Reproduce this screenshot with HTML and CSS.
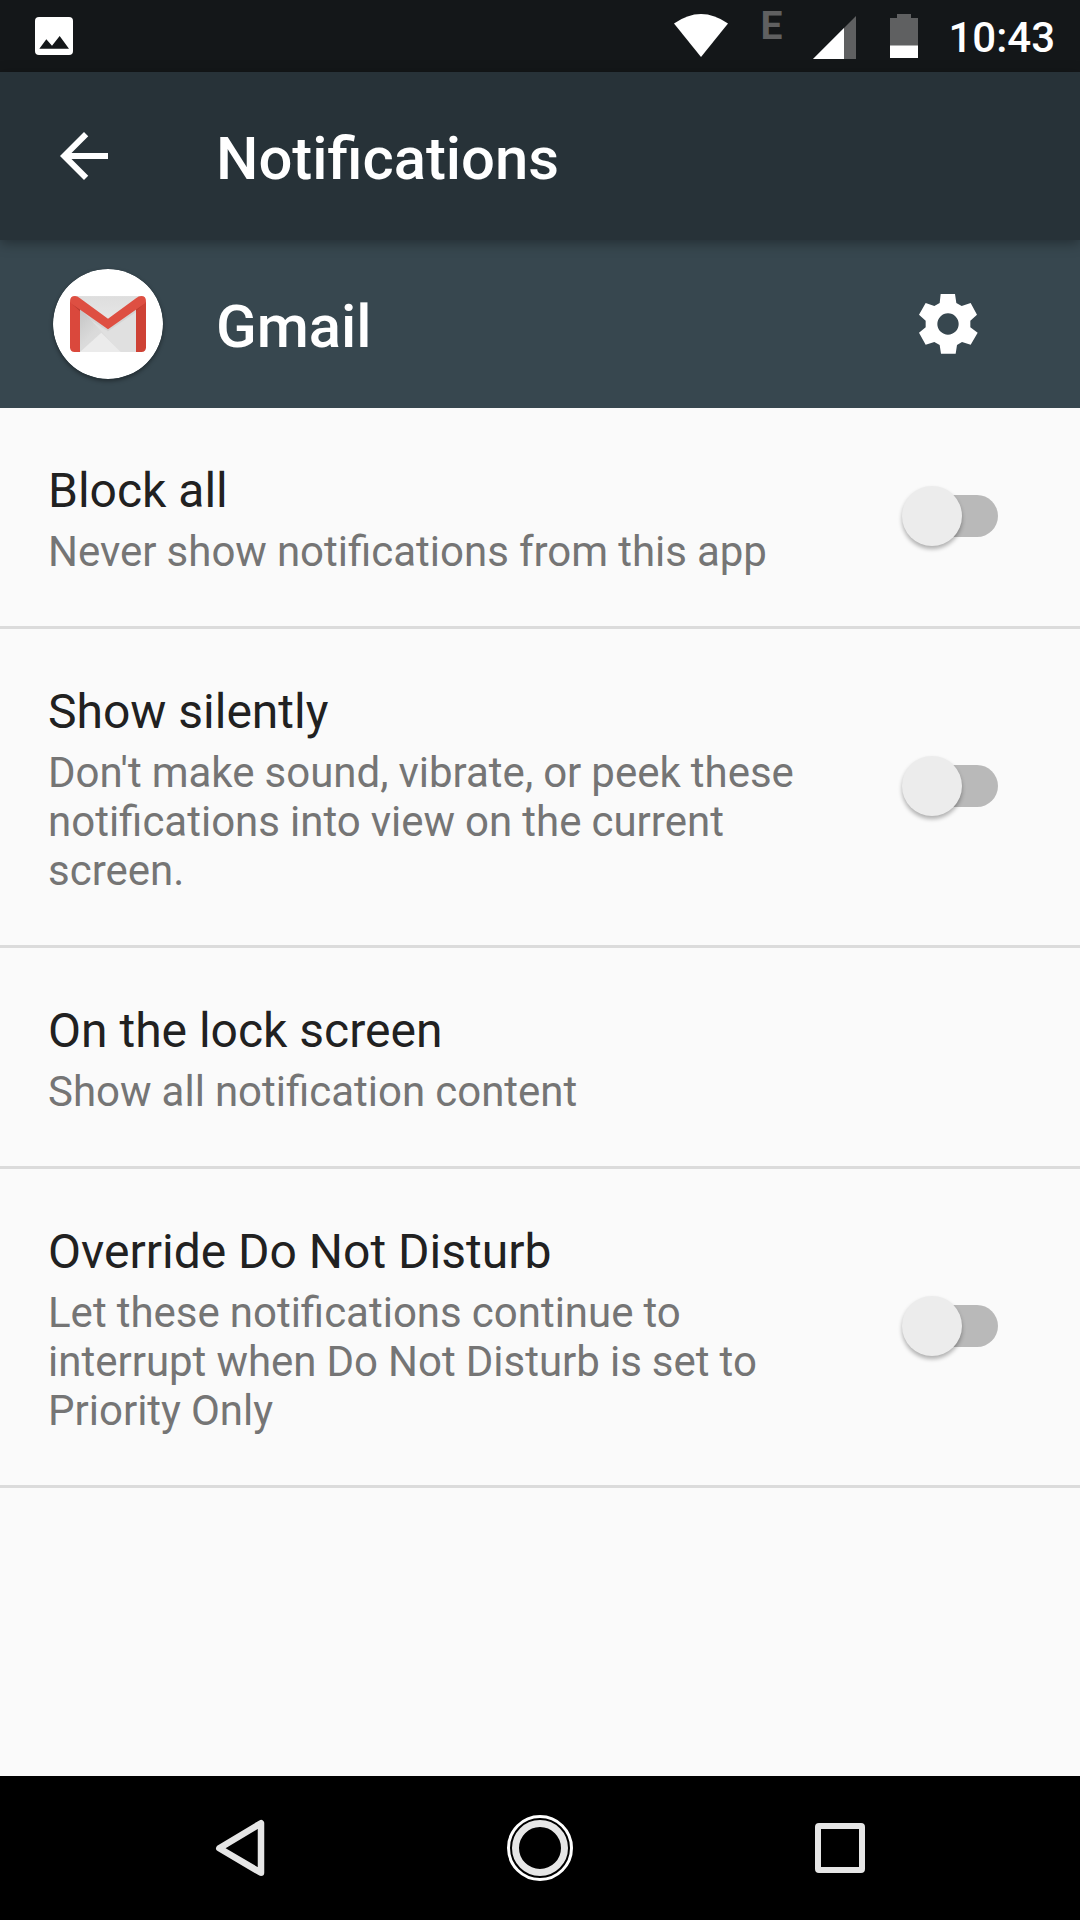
FILE: index.html
```html
<!DOCTYPE html>
<html lang="en">
<head>
<meta charset="utf-8">
<title>Notifications</title>
<link rel="stylesheet" href="styles.css">
</head>
<body>
<div class="screen">
  <div class="status-bar">
    <svg class="picture-icon" viewBox="0 0 114 114"><rect width="114" height="114" rx="12" fill="#fff"/><path d="M13 95L34 67L51 86L74 57L102 95Z" fill="#141719"/></svg>
    <div class="status-icons">
      <svg class="wifi-icon" viewBox="0 0 54 44"><path d="M0 9.5Q27 -9.5 54 9.5L27 43Z" fill="#fff"/></svg>
      <span class="network-type">E</span>
      <svg class="signal-icon" viewBox="0 0 43 43"><path d="M43 0V43H0Z" fill="#5f6061"/><path d="M31 12V43H0Z" fill="#fff"/></svg>
      <svg class="battery-icon" viewBox="0 0 28 44"><path d="M7 0H21V4H28V44H0V4H7Z" fill="#5f6061"/><path d="M0 31.500H28V44H0Z" fill="#fff"/></svg>
      <span class="clock">10:43</span>
    </div>
  </div>

  <header class="app-bar">
    <svg class="back-icon" viewBox="0 0 24 24"><path d="M20 11H7.830l5.590-5.590L12 4l-8 8 8 8 1.410-1.410L7.830 13H20v-2z" fill="#fff"/></svg>
    <h1 class="bar-title">Notifications</h1>
  </header>

  <div class="app-header">
    <svg class="gmail-icon" viewBox="159 117 330 330">
      <defs>
        <linearGradient id="flap" x1="0" y1="0" x2="0" y2="1"><stop offset="0" stop-color="#dedede"/><stop offset="1" stop-color="#e6e6e6"/></linearGradient>
        <linearGradient id="fold" x1="0" y1="0" x2="1" y2="1"><stop offset="0" stop-color="#c4c4c4"/><stop offset=".45" stop-color="#dadada"/><stop offset="1" stop-color="#e0e0e0"/></linearGradient>
      </defs>
      <circle cx="324" cy="282" r="165" fill="#fff"/>
      <path d="M225 199H424V366H225Z" fill="#e0e0e0"/>
      <path d="M240 235L362 366H240Z" fill="url(#fold)"/>
      <path d="M240 366L304 308L362 366Z" fill="#ebebeb"/>
      <path d="M240 236L324 297L408 236V246L324 304L240 248Z" fill="#c8c8c8" opacity=".5"/>
      <path d="M225 199H424L324 268Z" fill="url(#flap)"/>
      <path d="M210 214L240 234V366H224Q210 366 210 352Z" fill="#da483c"/>
      <path d="M438 214L408 234V366H424Q438 366 438 352Z" fill="#ce4235"/>
      <path d="M214 220L240 236V244Z" fill="#b93c31"/>
      <path d="M434 220L408 236V244Z" fill="#bd3c31"/>
      <path d="M210 214Q210 198 225 198Q232 198 240 205L324 266L408 205Q416 198 424 198Q438 198 438 214Q438 220 431 223L324 298L217 223Q210 220 210 214Z" fill="#de4f42"/>
    </svg>
    <h2 class="bar-title">Gmail</h2>
    <svg class="gear-icon" viewBox="96 84 216 216"><path fill="#fff" fill-rule="evenodd" d="M182 102H225L229 129L245 138L272 129L291 164L271 182V202L293 218L272 254L246 246L231 255L227 281H183L179 255L163 246L137 254L117 218L137 202V182L117 164L137 129L163 138L179 129ZM204 160a32 32 0 1 0 0 64a32 32 0 1 0 0-64Z"/></svg>
  </div>

  <main class="settings">
    <div class="row">
      <div class="row-text">
        <div class="row-title">Block all</div>
        <div class="row-summary">Never show notifications from this app</div>
      </div>
      <div class="switch"><div class="thumb"></div></div>
    </div>
    <div class="row">
      <div class="row-text">
        <div class="row-title">Show silently</div>
        <div class="row-summary">Don't make sound, vibrate, or peek these notifications into view on the current screen.</div>
      </div>
      <div class="switch"><div class="thumb"></div></div>
    </div>
    <div class="row">
      <div class="row-text">
        <div class="row-title">On the lock screen</div>
        <div class="row-summary">Show all notification content</div>
      </div>
    </div>
    <div class="row">
      <div class="row-text">
        <div class="row-title">Override Do Not Disturb</div>
        <div class="row-summary">Let these notifications continue to interrupt when Do Not Disturb is set to Priority Only</div>
      </div>
      <div class="switch"><div class="thumb"></div></div>
    </div>
  </main>

  <nav class="nav-bar">
    <svg class="nav-button" viewBox="0 0 300 144"><path d="M171 47.200V96.800L129.300 72.300Z" fill="none" stroke="#e6e6e6" stroke-width="6.500" stroke-linejoin="round"/></svg>
    <svg class="nav-button" viewBox="0 0 300 144"><circle cx="150" cy="72" r="31.500" fill="none" stroke="#fff" stroke-width="3"/><circle cx="150" cy="72" r="24.500" fill="none" stroke="#e6e6e6" stroke-width="7"/></svg>
    <svg class="nav-button" viewBox="0 0 300 144"><rect x="128" y="50" width="44" height="44" rx="1" fill="none" stroke="#e6e6e6" stroke-width="6" stroke-linejoin="round"/></svg>
  </nav>
</div>
</body>
</html>
```
FILE: styles.css
```css
* {
  box-sizing: border-box;
}

body {
  margin: 0;
  font-family: Roboto, sans-serif;
}

.screen {
  display: flex;
  flex-direction: column;
  width: 1080px;
  height: 1920px;
  overflow: hidden;
  background: #fafafa;
}

svg {
  display: block;
  flex: none;
}

.status-bar {
  display: flex;
  justify-content: space-between;
  height: 72px;
  padding: 0 25px 0 35px;
  background: #141719;
}

.picture-icon {
  width: 38px;
  height: 38px;
  margin-top: 17px;
}

.status-icons {
  display: flex;
  align-items: flex-start;
  color: #fff;
}

.wifi-icon {
  width: 54px;
  height: 44px;
  margin: 14px 32px 0 0;
}

.network-type {
  width: 53px;
  padding-top: 3px;
  color: #5f6061;
  font-size: 39px;
  font-weight: 700;
  line-height: 47px;
}

.signal-icon {
  width: 43px;
  height: 43px;
  margin: 16px 34px 0 0;
}

.battery-icon {
  width: 28px;
  height: 44px;
  margin: 14px 30px 0 0;
}

.clock {
  padding-top: 13px;
  font-size: 42px;
  font-weight: 500;
  line-height: 49px;
}

.app-bar,
.app-header {
  display: flex;
  align-items: center;
  flex: none;
  height: 168px;
}

.app-bar {
  position: relative;
  padding-left: 48px;
  background: #273238;
  box-shadow: 0 3px 12px rgba(0, 0, 0, .35);
}

.back-icon {
  width: 72px;
  height: 72px;
  margin-right: 96px;
}

.bar-title {
  margin: 0;
  padding-top: 6px;
  color: #fff;
  font-size: 59.8px;
  font-weight: 500;
  line-height: 71px;
}

.app-header {
  padding: 0 96px 0 53px;
  background: #37474f;
}

.gmail-icon {
  width: 110px;
  height: 110px;
  margin-right: 53px;
  border-radius: 50%;
  box-shadow: 0 2px 4px rgba(0, 0, 0, .4);
}

.gear-icon {
  width: 72px;
  height: 72px;
  margin-left: auto;
}

.settings {
  flex: 1;
}

.row {
  display: flex;
  align-items: center;
  justify-content: space-between;
  padding: 0 82px 0 48px;
  border-bottom: 3px solid #dbdbdb;
}

.row-text {
  width: 776px;
  padding: 54px 0 50px;
}

.row-title {
  margin-bottom: 8px;
  color: #212121;
  font-size: 48px;
  line-height: 57px;
}

.row-summary {
  color: #757575;
  font-size: 42px;
  line-height: 49px;
  word-spacing: -.4px;
}

.switch {
  display: flex;
  align-items: center;
  width: 96px;
  height: 60px;
  margin-bottom: 2px;
}

.switch::after {
  content: "";
  width: 66px;
  height: 42px;
  margin-left: -30px;
  border-radius: 0 21px 21px 0;
  background: #b9b9b9;
}

.thumb {
  position: relative;
  z-index: 1;
  flex: none;
  width: 60px;
  height: 60px;
  border-radius: 50%;
  background: #ececec;
  box-shadow: 0 3px 4px rgba(0, 0, 0, .3);
}

.nav-bar {
  display: flex;
  justify-content: center;
  height: 144px;
  background: #000;
}

.nav-button {
  width: 300px;
  height: 144px;
}
```
